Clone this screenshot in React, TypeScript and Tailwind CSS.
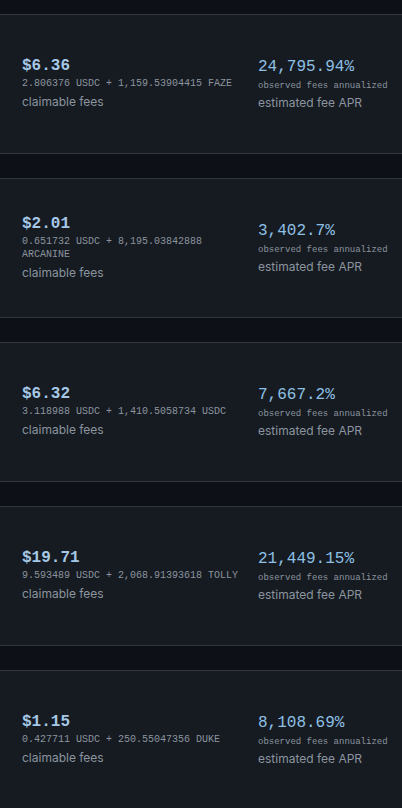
const positions = [
  { usd: "$6.36", detail: "2.806376 USDC + 1,159.53904415 FAZE", apr: "24,795.94%" },
  { usd: "$2.01", detail: "0.651732 USDC + 8,195.03842888 ARCANINE", apr: "3,402.7%" },
  { usd: "$6.32", detail: "3.118988 USDC + 1,410.5058734 USDC", apr: "7,667.2%" },
  { usd: "$19.71", detail: "9.593489 USDC + 2,068.91393618 TOLLY", apr: "21,449.15%" },
  { usd: "$1.15", detail: "0.427711 USDC + 250.55047356 DUKE", apr: "8,108.69%" },
];

const mono = "font-['Liberation_Mono',monospace]";
const sans = "font-['Inter',sans-serif]";

export default function App() {
  return (
    <div className="min-h-screen bg-[#0d1117] pt-[14px] pb-6 flex flex-col gap-[24px]">
      {positions.map((p, i) => (
        <div
          key={i}
          className="h-[140px] bg-[#161b22] border-y border-[#30363d] px-[22px] grid grid-cols-[226px_1fr] gap-[10px] items-center"
        >
          {/* claimable fees */}
          <div className="flex flex-col">
            <p className={`${mono} text-[16px] leading-[18px] font-bold text-[#a5c8e6]`}>{p.usd}</p>
            <p className={`${mono} text-[10px] leading-[13px] mt-[2px] text-[#8b949e]`}>{p.detail}</p>
            <p className={`${sans} text-xs leading-[18px] mt-[3px] text-[#8b949e]`}>claimable fees</p>
          </div>

          {/* fee apr */}
          <div className="flex flex-col whitespace-nowrap">
            <p className={`${mono} text-[16px] leading-5 text-[#8ec0e4]`}>{p.apr}</p>
            <p className={`${mono} text-[9px] leading-[14px] mt-[2px] text-[#8b949e]`}>observed fees annualized</p>
            <p className={`${sans} text-xs leading-[18px] mt-[1px] text-[#8b949e]`}>estimated fee APR</p>
          </div>
        </div>
      ))}
    </div>
  );
}
